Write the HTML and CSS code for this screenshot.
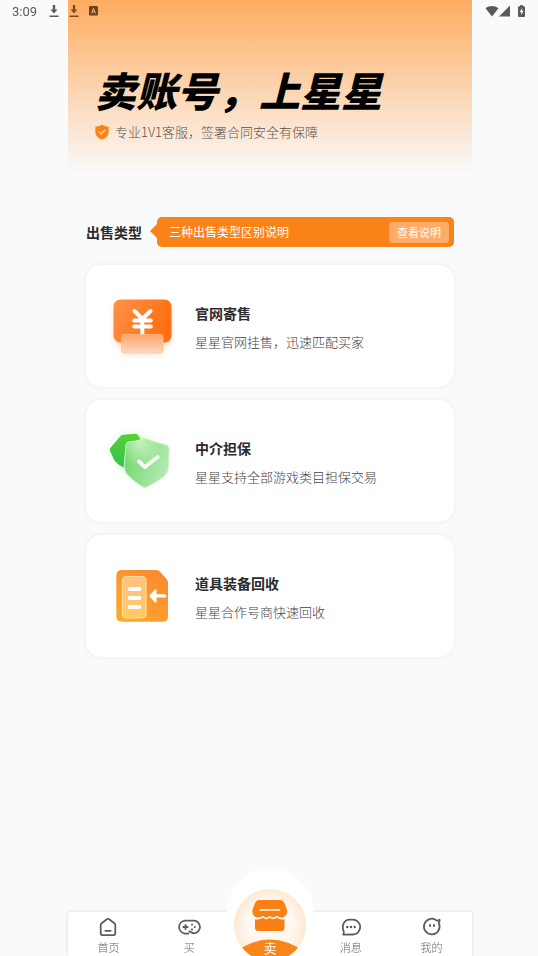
FILE: index.html
```html
<!DOCTYPE html>
<html lang="zh-CN">
<head>
    <meta charset="UTF-8">
    <meta name="viewport" content="width=device-width, initial-scale=1.0">
    <title>卖账号，上星星</title>
    <link rel="stylesheet" href="styles.css">
</head>
<body>

    <div class="status-bar">
        <span class="time">3:09</span>
        <svg class="status-icon" width="12" height="14" viewBox="0 0 12 14"><path d="M4.800 1h2.400v4.500h2.300L6 9.500 2.500 5.500h2.300zM1.500 11.500h9V13h-9z"/></svg>
        <svg class="status-icon" width="12" height="14" viewBox="0 0 12 14"><path d="M4.800 1h2.400v4.500h2.300L6 9.500 2.500 5.500h2.300zM1.500 11.500h9V13h-9z"/></svg>
        <svg class="status-icon badge-a" width="9" height="10" viewBox="0 0 9 10"><rect width="9" height="9.500" rx="1"/><path class="line" d="M2.600 7.400 4.500 2.400 6.400 7.400M3.200 5.800h2.600"/></svg>
        <span class="spacer"></span>
        <svg class="status-icon" width="14" height="12" viewBox="0 0 14 12"><path d="M0.500 3.200C4.200 0.300 9.800 0.300 13.500 3.200L7 11.500z"/></svg>
        <svg class="status-icon" width="11" height="12" viewBox="0 0 11 12"><path d="M11 0.500V11.500H0z"/></svg>
        <svg class="status-icon battery" width="7" height="12" viewBox="0 0 7 12"><path d="M2.200 0h2.600v1.200H6a1 1 0 0 1 1 1V11a1 1 0 0 1-1 1H1a1 1 0 0 1-1-1V2.200a1 1 0 0 1 1-1h1.200z"/><path class="bolt" d="M4.200 3 1.700 7h1.500v3L5.500 6H4.200z"/></svg>
    </div>

    <div class="app">
        <header class="hero">
            <h1>卖账号，上星星</h1>
            <p class="promise">
                <svg width="14" height="16" viewBox="0 0 14 16"><path fill="#fa8316" d="M7 0.500C9 1.900 11.200 2.400 13.600 2.600V8c0 4-2.800 6.300-6.600 7.600C3.200 14.300 0.400 12 0.400 8V2.600C2.800 2.400 5 1.900 7 0.500z"/><path fill="none" stroke="#ffd9b5" stroke-width="1.200" d="M4 7.700 6.300 10 10 5.800"/></svg>
                <span>专业1V1客服，签署合同安全有保障</span>
            </p>
        </header>

        <main class="content">
            <div class="type-row">
                <h2>出售类型</h2>
                <div class="tip">
                    <span>三种出售类型区别说明</span>
                    <button type="button">查看说明</button>
                </div>
            </div>

            <a class="card" href="#consign">
                <svg width="80" height="80" viewBox="0 0 80 80">
                    <defs>
                        <linearGradient id="payBg" x1="0" y1="0" x2="1" y2="0.4"><stop offset="0" stop-color="#ff9148"/><stop offset="1" stop-color="#ff6f12"/></linearGradient>
                        <linearGradient id="payGlass" x1="0" y1="0" x2="0" y2="1"><stop offset="0" stop-color="#ffa26b"/><stop offset="1" stop-color="#ffd9c2"/></linearGradient>
                        <filter id="payGlow" x="-30%" y="-30%" width="160%" height="160%"><feGaussianBlur stdDeviation="3"/></filter>
                    </defs>
                    <rect x="13" y="18" width="55" height="42" rx="8" fill="#ff9a5c" opacity="0.45" filter="url(#payGlow)"/>
                    <rect x="20" y="52" width="40" height="16" rx="4" fill="#ff9a5c" opacity="0.3" filter="url(#payGlow)"/>
                    <rect x="11.500" y="13.500" width="58" height="43" rx="7" fill="url(#payBg)"/>
                    <path fill="none" stroke="#fff" stroke-width="4" stroke-linecap="round" stroke-linejoin="round" d="M32.500 25 40.300 33 48.500 25M32.300 34.500h16.500M32.300 40.600h16.500M40.300 33v15"/>
                    <rect x="19.500" y="48.500" width="41.500" height="18.500" rx="2" fill="url(#payGlass)" stroke="#ffc19a" stroke-width="0.700"/>
                </svg>
                <div class="card-text">
                    <h3>官网寄售</h3>
                    <p>星星官网挂售，迅速匹配买家</p>
                </div>
            </a>

            <a class="card" href="#guarantee">
                <svg width="80" height="80" viewBox="0 0 80 80">
                    <defs>
                        <linearGradient id="backShield" x1="0.600" y1="0" x2="0.300" y2="1"><stop offset="0" stop-color="#58d132"/><stop offset="1" stop-color="#35c151"/></linearGradient>
                        <linearGradient id="frontShield" x1="0.100" y1="0.300" x2="1" y2="0.600"><stop offset="0" stop-color="#78da73"/><stop offset="0.500" stop-color="#97e294"/><stop offset="1" stop-color="#b5ecb5"/></linearGradient>
                        <radialGradient id="shieldTop" cx="0.350" cy="0.080" r="0.500"><stop offset="0" stop-color="#c5f2bd"/><stop offset="1" stop-color="#c5f2bd" stop-opacity="0"/></radialGradient>
                        <filter id="shieldGlow" x="-40%" y="-40%" width="180%" height="180%"><feGaussianBlur stdDeviation="5"/></filter>
                    </defs>
                    <path fill="#a5eba0" opacity="0.300" filter="url(#shieldGlow)" d="M8 28 20 12 36 12 62 24 56 52 40 62 20 48z"/>
                    <path fill="url(#backShield)" d="M19 14.600Q20 13.800 21.300 13.700L33 12.800Q35 12.700 36 14.200L40 20 38 46 21.500 46.500Q12 42 10.300 34.800L7.800 29.600Q7.300 28.200 8.300 27z"/>
                    <path fill="url(#frontShield)" stroke="#d3f5d1" stroke-width="1" d="M27 20.800Q34 20.500 39 18.500Q42 17.300 45 18Q52 21 64.500 24Q67.200 24.700 67.200 27.300L66.500 46.500Q66.200 51.500 62 55.500Q54 61.800 44.500 66.200Q42.500 67 40.500 65.800Q31 60 25 53.500Q22 49.800 22.200 45L24 23.500Q24.300 21 27 20.800z"/>
                    <path fill="url(#shieldTop)" d="M27 20.800Q34 20.500 39 18.500Q42 17.300 45 18Q52 21 64.500 24L66 46 44 66 23 46 24 23.500z"/>
                    <path fill="none" stroke="#f4fff2" stroke-width="4" stroke-linecap="round" stroke-linejoin="round" d="M37 40.500 43 46 55.500 36"/>
                </svg>
                <div class="card-text">
                    <h3>中介担保</h3>
                    <p>星星支持全部游戏类目担保交易</p>
                </div>
            </a>

            <a class="card" href="#recycle">
                <svg width="80" height="80" viewBox="0 0 80 80">
                    <defs>
                        <linearGradient id="fileBg" x1="1" y1="0" x2="0.200" y2="1"><stop offset="0" stop-color="#fa8530"/><stop offset="1" stop-color="#fea92b"/></linearGradient>
                        <linearGradient id="filePanel" x1="0" y1="0" x2="0" y2="1"><stop offset="0" stop-color="#ffc283"/><stop offset="1" stop-color="#ffcb63"/></linearGradient>
                    </defs>
                    <path fill="url(#fileBg)" d="M20 14H54.500Q56.500 14 57.800 15.500L65 23.500Q66 24.800 66 26.500V60.500Q66 65.700 61 65.700H20Q14.300 65.700 14.300 60.500V19.500Q14.300 14 20 14z"/>
                    <rect x="20.500" y="20.500" width="23.500" height="41.500" rx="4" fill="url(#filePanel)" stroke="#ffdda0" stroke-width="1.200"/>
                    <path fill="none" stroke="#fff" stroke-width="3.800" stroke-linecap="round" d="M27.500 33H37.500M27.500 42H37.500M27.500 51H37.500"/>
                    <path fill="#fff" d="M48 38.800 53 33.600Q54.500 32.500 54.500 34.500V38.200H63Q64.500 38.200 64.500 40T63 41.600H54.500V45.500Q54.500 47.500 53 46.400L48 41.200Q47 40 48 38.800z"/>
                </svg>
                <div class="card-text">
                    <h3>道具装备回收</h3>
                    <p>星星合作号商快速回收</p>
                </div>
            </a>
        </main>

        <nav class="tabbar">
            <a class="tab" href="#home">
                <svg width="24" height="24" viewBox="0 0 24 24"><path d="M10.800 4.200Q12 3.400 13.200 4.200L18.400 8.200Q19.300 9 19.300 10.200V18Q19.300 20.200 17.100 20.200H6.900Q4.700 20.200 4.700 18V10.200Q4.700 9 5.600 8.200zM9.300 15.800H14.700"/></svg>
                <span>首页</span>
            </a>
            <a class="tab" href="#buy">
                <svg width="24" height="24" viewBox="0 0 24 24"><path d="M11.500 18.300C9.500 18.800 8.500 18.700 7 18.300A6.400 6.400 0 0 1 8 5.700H15.800A6.300 6.300 0 0 1 17.500 18.200C15 19 14.200 16.300 12.300 16.300M8.500 9.800V14.200M6.300 12H10.700M15 9.300V9.800M15 14.200V14.700M17.800 11.800V12.200"/></svg>
                <span>买</span>
            </a>
            <a class="sell" href="#sell">
                <svg width="88" height="88" viewBox="0 0 88 88">
                    <defs>
                        <radialGradient id="sellBg"><stop offset="0" stop-color="#fffaf5"/><stop offset="0.650" stop-color="#fff7f0"/><stop offset="1" stop-color="#ffe8d3"/></radialGradient>
                        <clipPath id="sellClip"><circle cx="44" cy="57" r="36"/></clipPath>
                    </defs>
                    <circle cx="44" cy="44" r="43.500" fill="#fff"/>
                    <circle cx="44" cy="57" r="36" fill="url(#sellBg)"/>
                    <path clip-path="url(#sellClip)" fill="#f98419" d="M4 88Q24 71.500 44 71.500T84 88z"/>
                    <path fill="#fa8014" d="M33 32H54.500Q57.200 32 58.200 34.500L61 41.800Q62 47.500 57.200 49.300Q53.500 50.200 50.800 47.800Q47.300 51 43.800 47.800Q40.200 51 36.700 47.800Q34 50.200 30.300 49.300Q25.500 47.500 26.500 41.800L29.300 34.500Q30.200 32 33 32z"/>
                    <path fill="#fa8014" d="M29 51.300Q33.500 52 36.700 49.800Q40.200 52.500 43.800 49.800Q47.300 52.500 50.800 49.800Q54 52 58.500 51.300V60Q58.500 63 55.500 63H32Q29 63 29 60z"/>
                    <path fill="none" stroke="#fff" stroke-width="1.600" stroke-linecap="round" d="M34 42H53.500"/>
                </svg>
                <span>卖</span>
            </a>
            <a class="tab" href="#message">
                <svg width="24" height="24" viewBox="0 0 24 24"><path d="M4.200 19.600Q5.300 18.300 4.600 16.300C2.200 10 5.500 4.700 10.500 4.700H13.800A7.400 7.400 0 0 1 13.800 19.500z"/><path class="dots" d="M8.300 12h0.010M12 12h0.010M15.700 12h0.010"/></svg>
                <span>消息</span>
            </a>
            <a class="tab" href="#mine">
                <svg width="24" height="24" viewBox="0 0 24 24"><path d="M16.800 5.600Q18.300 5.800 19.600 4.800Q19.800 6.600 18.800 8.200A7.800 7.800 0 1 1 16.800 5.600zM10 9.800V11.200M14 9.800V11.200"/></svg>
                <span>我的</span>
            </a>
        </nav>
    </div>

</body>
</html>
```

FILE: styles.css
```css
* {
    box-sizing: border-box;
}
body {
    font-family: "Noto Sans CJK SC", sans-serif;
    background-color: #f9fafc;
    color: #2b2b2b;
    margin: 0;
}
h1, h2, h3, p {
    margin: 0;
}
a {
    color: inherit;
    text-decoration: none;
}
svg {
    display: block;
    flex-shrink: 0;
}

/* system status bar, lies over the page */
.status-bar {
    position: fixed;
    top: 0;
    left: 0;
    right: 0;
    display: flex;
    align-items: center;
    height: 22px;
    padding: 0 13px 0 12px;
    font-family: Roboto, sans-serif;
    font-size: 13px;
    color: #5a5a5a;
}
.status-icon {
    fill: #5a5a5a;
}
.time {
    margin-right: 11px;
}
.time + .status-icon {
    margin-right: 8px;
}
.time ~ .status-icon:nth-of-type(2) {
    fill: #7a4d26;
}
.status-bar .badge-a {
    fill: #6b4320;
    margin-left: 9px;
}
.badge-a .line {
    fill: none;
    stroke: #fbb26b;
}
.spacer {
    flex: 1;
}
.battery {
    margin-left: 8px;
}
.battery .bolt {
    fill: #fff;
}

.app {
    display: flex;
    flex-direction: column;
    min-height: 100vh;
    margin: 0 66px 0 68px;
}

.hero {
    padding: 67px 27px 33px;
    background: linear-gradient(#ffac60, #f9fafc);
}
.hero h1 {
    font-size: 41px;
    font-weight: 900;
    font-style: italic;
    line-height: 44px;
    color: #000;
    white-space: nowrap;
}
.promise {
    display: flex;
    align-items: center;
    gap: 6px;
    margin-top: 11px;
    font-size: 13px;
    font-weight: 300;
    line-height: 20px;
    color: #5c5148;
}

.content {
    display: flex;
    flex-direction: column;
    gap: 13px;
    padding: 42px 18px 32px;
}
.type-row {
    display: flex;
    align-items: center;
    gap: 15px;
    margin-bottom: 5px;
}
.type-row h2 {
    font-size: 14px;
    line-height: 20px;
    white-space: nowrap;
}
.tip {
    position: relative;
    flex: 1;
    display: flex;
    align-items: center;
    justify-content: space-between;
    height: 30px;
    padding: 0 5px 0 12px;
    border-radius: 5px;
    background-color: #f98317;
    color: #fff;
    font-size: 12px;
    line-height: 20px;
}
.tip::before {
    content: "";
    position: absolute;
    left: -7px;
    top: 7px;
    border: 7px solid transparent;
    border-left: 0;
    border-right-color: #f98317;
}
.tip button {
    height: 21px;
    padding: 0 8px;
    border: none;
    border-radius: 4px;
    background-color: #fbad68;
    color: #fff;
    font-family: inherit;
    font-size: 11px;
    line-height: 20px;
    cursor: pointer;
}

.card {
    display: flex;
    align-items: center;
    gap: 13px;
    min-height: 122px;
    padding: 16px;
    border-radius: 15px;
    background-color: #fff;
    box-shadow: 0 0 4px rgba(0, 0, 0, 0.07);
}
.card-text {
    padding-top: 2px;
}
.card h3 {
    font-size: 14px;
    line-height: 20px;
}
.card p {
    margin-top: 9px;
    font-size: 13px;
    font-weight: 300;
    line-height: 20px;
    color: #444;
}

.tabbar {
    position: sticky;
    bottom: 0;
    display: grid;
    grid-template-columns: repeat(5, minmax(0, 1fr));
    grid-template-rows: 44px;
    margin-top: auto;
    background-color: #fff;
    box-shadow: 0 0 3px rgba(0, 0, 0, 0.15);
}
.tab {
    display: flex;
    flex-direction: column;
    align-items: center;
    padding-top: 3px;
    font-size: 11px;
    font-weight: 300;
    line-height: 17px;
    color: #666;
}
.tab svg {
    fill: none;
    stroke: #5c5c5c;
    stroke-width: 1.8;
    stroke-linecap: round;
    stroke-linejoin: round;
}
.tab .dots {
    stroke-width: 2.4;
}
.sell {
    display: grid;
    align-self: end;
    justify-self: center;
    color: #fff;
    font-size: 13px;
    line-height: 16px;
}
.sell svg, .sell span {
    grid-area: 1 / 1;
}
.sell span {
    align-self: end;
    justify-self: center;
}
```
